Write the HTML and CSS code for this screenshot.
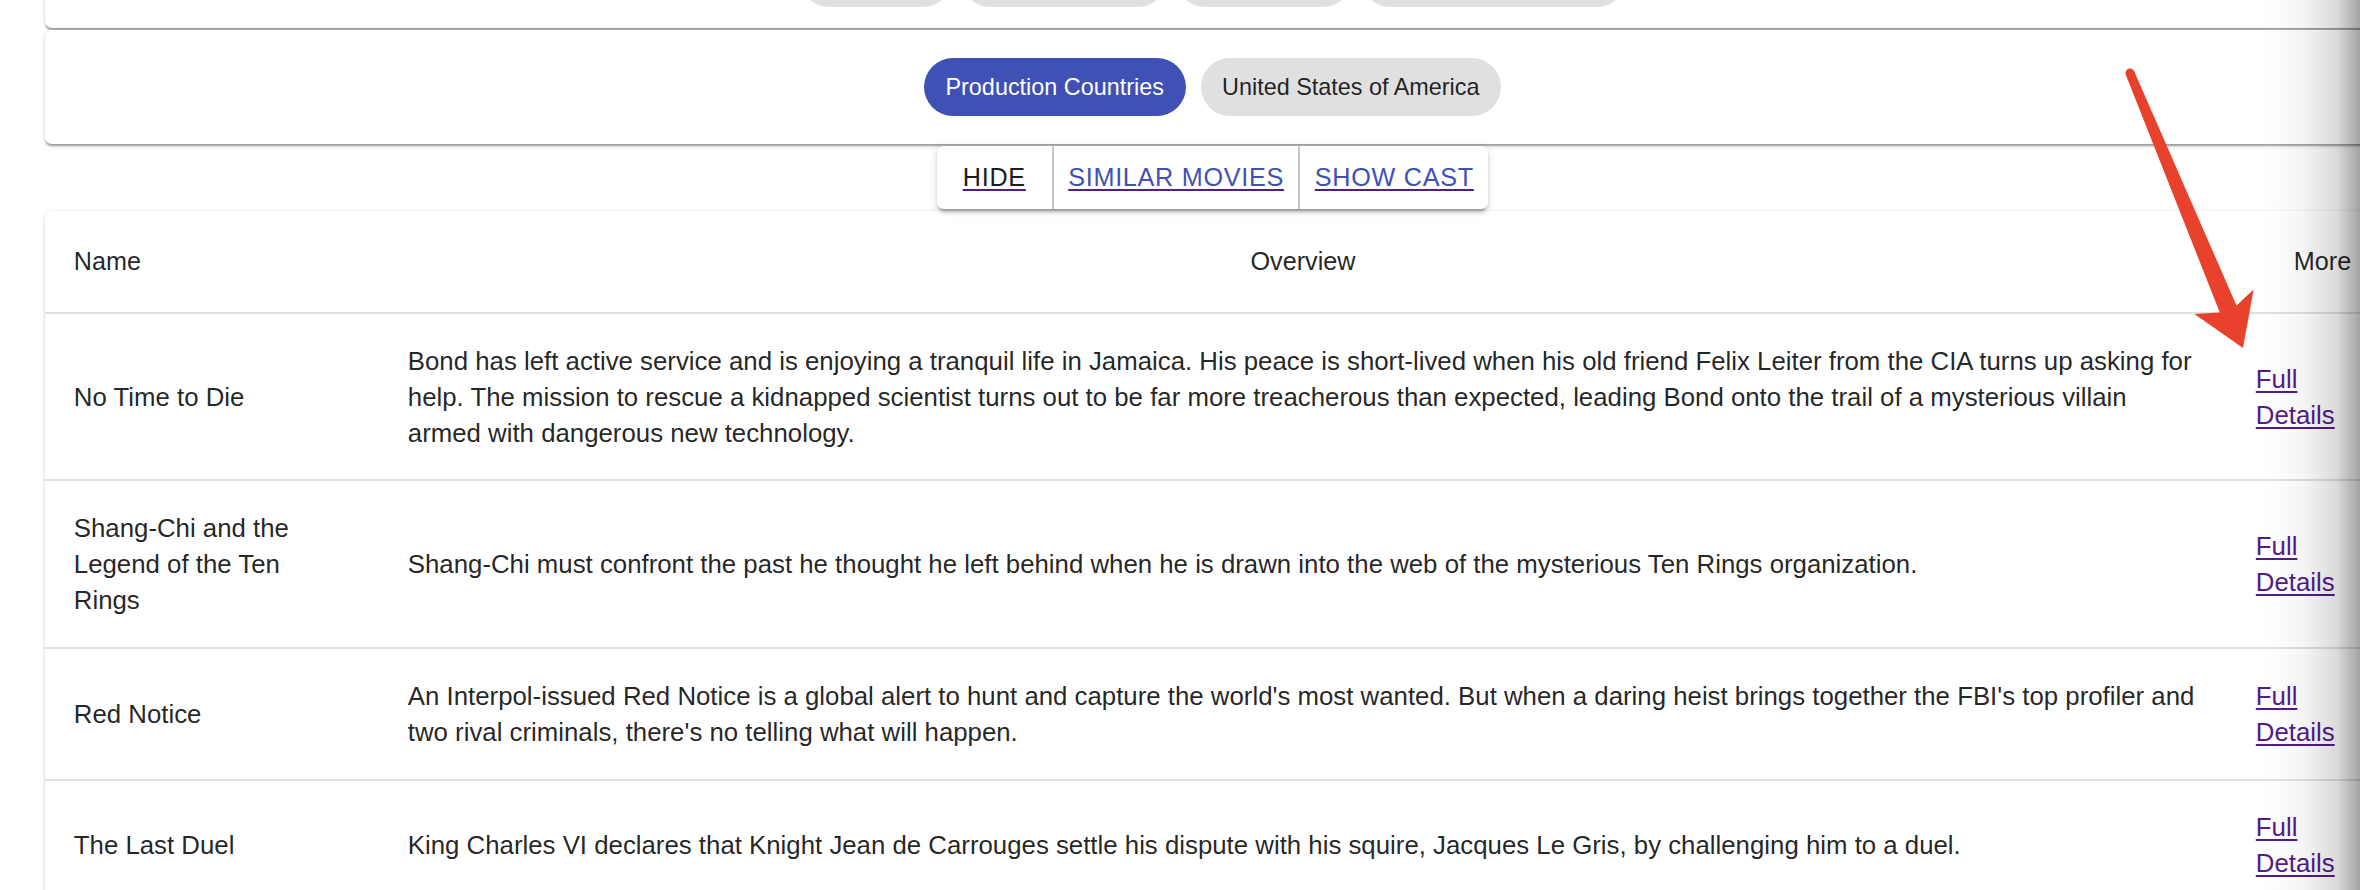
FILE: index.html
```html
<!DOCTYPE html>
<html lang="en">
<head>
<meta charset="utf-8">
<title>Movie details</title>
<link rel="stylesheet" href="styles.css">
</head>
<body>
<div class="page">
  <div class="paper card-top">
    <div class="chips chips-tight">
      <span class="chip chip-w1"></span>
      <span class="chip chip-w2"></span>
      <span class="chip chip-w3"></span>
      <span class="chip chip-w4"></span>
    </div>
  </div>

  <div class="paper card-countries">
    <div class="chips">
      <span class="chip chip-primary">Production Countries</span>
      <span class="chip">United States of America</span>
    </div>
  </div>

  <div class="actions">
    <div class="btn-group">
      <a class="btn btn-plain" href="#"><span class="btn-label">HIDE</span></a>
      <a class="btn" href="#"><span class="btn-label">SIMILAR MOVIES</span></a>
      <a class="btn" href="#"><span class="btn-label">SHOW CAST</span></a>
    </div>
  </div>

  <div class="paper table-card">
    <table class="movies">
      <colgroup>
        <col class="col-name">
        <col class="col-overview">
        <col class="col-more">
      </colgroup>
      <thead>
        <tr>
          <th>Name</th>
          <th class="align-center">Overview</th>
          <th class="align-right">More</th>
        </tr>
      </thead>
      <tbody>
        <tr>
          <td class="name">No Time to Die</td>
          <td>Bond has left active service and is enjoying a tranquil life in Jamaica. His peace is short-lived when his old friend Felix Leiter from the CIA turns up asking for help. The mission to rescue a kidnapped scientist turns out to be far more treacherous than expected, leading Bond onto the trail of a mysterious villain armed with dangerous new technology.</td>
          <td><a class="details" href="#">Full Details</a></td>
        </tr>
        <tr>
          <td class="name">Shang-Chi and the Legend of the Ten Rings</td>
          <td>Shang-Chi must confront the past he thought he left behind when he is drawn into the web of the mysterious Ten Rings organization.</td>
          <td><a class="details" href="#">Full Details</a></td>
        </tr>
        <tr>
          <td class="name">Red Notice</td>
          <td>An Interpol-issued Red Notice is a global alert to hunt and capture the world's most wanted. But when a daring heist brings together the FBI's top profiler and two rival criminals, there's no telling what will happen.</td>
          <td><a class="details" href="#">Full Details</a></td>
        </tr>
        <tr>
          <td class="name">The Last Duel</td>
          <td>King Charles VI declares that Knight Jean de Carrouges settle his dispute with his squire, Jacques Le Gris, by challenging him to a duel.</td>
          <td><a class="details" href="#">Full Details</a></td>
        </tr>
      </tbody>
    </table>
  </div>
</div>

<div class="edge-shade"></div>

<svg class="annotation" width="2360" height="890" viewBox="0 0 2360 890" xmlns="http://www.w3.org/2000/svg">
  <circle cx="2130" cy="73" r="4.5" fill="#e8412c"/>
  <polygon fill="#e8412c" points="2134.2,71.3 2236.5,305.5 2253.6,289.6 2243,348 2194.4,313.9 2219.8,312.5 2125.8,74.7"/>
</svg>
</body>
</html>
```

FILE: styles.css
```css
html, body {
  margin: 0;
  padding: 0;
  background: #ffffff;
}

body {
  overflow: hidden;
  font-family: "Liberation Sans", Arial, Helvetica, sans-serif;
  color: rgba(0, 0, 0, 0.87);
  font-size: 25.2px;
  width: 2360px;
  height: 890px;
  position: relative;
}

.page {
  margin-left: 45px;
  width: 2335px;
}

.paper {
  background: #ffffff;
  border-radius: 7px;
  box-shadow: 0 3.6px 1.8px -1.8px rgba(0, 0, 0, 0.2),
              0 1.8px 1.8px 0 rgba(0, 0, 0, 0.14),
              0 1.8px 5.4px 0 rgba(0, 0, 0, 0.12);
}

.card-top {
  margin-top: -80px;
  padding: 29px 0 21px;
}

.card-countries {
  margin-top: 2px;
  padding: 28px 0;
}

.chips {
  display: flex;
  justify-content: center;
  gap: 15px;
}

.chips-tight {
  gap: 9px;
}

.chip {
  display: inline-flex;
  align-items: center;
  justify-content: center;
  box-sizing: border-box;
  height: 58px;
  padding: 0 21.6px;
  border-radius: 29px;
  background: #e0e0e0;
  color: rgba(0, 0, 0, 0.87);
  font-size: 23.4px;
  white-space: nowrap;
}

.chip-primary {
  background: #3f51b5;
  color: #ffffff;
}

.chip-w1 { width: 152px; }
.chip-w2 { width: 206px; }
.chip-w3 { width: 176px; }
.chip-w4 { width: 265px; }

.actions {
  margin-top: 2px;
  display: flex;
  justify-content: center;
}

.btn-group {
  display: flex;
  height: 63px;
  background: #ffffff;
  border-radius: 7px;
  box-shadow: 0 5.4px 1.8px -3.6px rgba(0, 0, 0, 0.2),
              0 3.6px 3.6px 0 rgba(0, 0, 0, 0.14),
              0 1.8px 9px 0 rgba(0, 0, 0, 0.12);
}

.btn {
  display: flex;
  align-items: center;
  justify-content: center;
  box-sizing: border-box;
  min-width: 115px;
  padding: 0 14.4px;
  font-size: 25.2px;
  letter-spacing: 0.72px;
  text-transform: uppercase;
  color: #3f51b5;
  text-decoration: underline;
  text-decoration-color: #551a8b;
  text-decoration-thickness: 2px;
  text-underline-offset: 3px;
}

.btn + .btn {
  border-left: 2px solid #c6c6c6;
}

.btn-plain {
  color: #1c1c1c;
}

.table-card {
  margin-top: 2px;
  overflow: hidden;
}

.movies {
  width: 100%;
  border-collapse: collapse;
  table-layout: fixed;
}

.col-name { width: 334px; }
.col-more { width: 153px; }

.movies th,
.movies td {
  padding: 28.8px;
  border-bottom: 2px solid #e0e0e0;
  text-align: left;
  vertical-align: middle;
  font-size: 25.8px;
  line-height: 36px;
  font-weight: 400;
  color: rgba(0, 0, 0, 0.87);
}

.movies td.name {
  padding-right: 32px;
}

.movies th {
  font-size: 25.2px;
  line-height: 43.2px;
}

.movies th.align-center { text-align: center; }
.movies th.align-right { text-align: right; }

.details {
  color: #551a8b;
  text-decoration: underline;
  text-decoration-thickness: 2px;
  text-underline-offset: 3px;
}

.edge-shade {
  position: absolute;
  top: 0;
  right: 0;
  width: 95px;
  height: 890px;
  pointer-events: none;
  background: linear-gradient(to right,
      rgba(0, 0, 0, 0) 0%,
      rgba(0, 0, 0, 0.04) 40%,
      rgba(0, 0, 0, 0.14) 75%,
      rgba(0, 0, 0, 0.36) 100%);
}

.annotation {
  position: absolute;
  top: 0;
  left: 0;
  pointer-events: none;
}
```
